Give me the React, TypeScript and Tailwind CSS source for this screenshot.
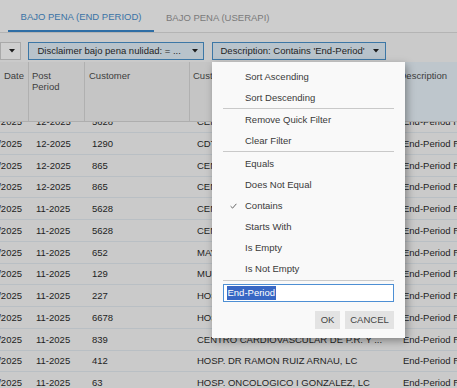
import React from "react";

type Row = { d: string; p: string; c: string; n: string; desc: string };

const rows: Row[] = [
  { d: "12/03/2025", p: "12-2025", c: "5628", n: "CENTRO DE DIAGNOSTICO Y TRATAMIENTO", desc: "End-Period Reversal" },
  { d: "12/03/2025", p: "12-2025", c: "1290", n: "CDT DE LOIZA INC", desc: "End-Period Reversal" },
  { d: "12/03/2025", p: "12-2025", c: "865", n: "CENTRO MEDICO DEL TURABO", desc: "End-Period Reversal" },
  { d: "12/03/2025", p: "12-2025", c: "865", n: "CENTRO MEDICO DEL TURABO", desc: "End-Period Reversal" },
  { d: "11/28/2025", p: "11-2025", c: "5628", n: "CENTRO DE DIAGNOSTICO Y TRATAMIENTO", desc: "End-Period Reversal" },
  { d: "11/28/2025", p: "11-2025", c: "5628", n: "CENTRO DE DIAGNOSTICO Y TRATAMIENTO", desc: "End-Period Reversal" },
  { d: "11/28/2025", p: "11-2025", c: "652", n: "MAYAGUEZ MEDICAL CENTER", desc: "End-Period Reversal" },
  { d: "11/28/2025", p: "11-2025", c: "129", n: "MUNICIPIO DE BAYAMON", desc: "End-Period Reversal" },
  { d: "11/28/2025", p: "11-2025", c: "227", n: "HOSPITAL GENERAL MENONITA", desc: "End-Period Reversal" },
  { d: "11/28/2025", p: "11-2025", c: "6678", n: "HOSPITAL SAN CARLOS BORROMEO", desc: "End-Period Reversal" },
  { d: "11/28/2025", p: "11-2025", c: "839", n: "CENTRO CARDIOVASCULAR DE P.R. Y DEL CARIBE", desc: "End-Period Reversal" },
  { d: "11/28/2025", p: "11-2025", c: "412", n: "HOSP. DR RAMON RUIZ ARNAU, LC", desc: "End-Period Reversal" },
  { d: "11/28/2025", p: "11-2025", c: "63", n: "HOSP. ONCOLOGICO I GONZALEZ, LC", desc: "End-Period Reversal" },
];

function Caret({ className = "" }: { className?: string }) {
  return (
    <svg width="6" height="4" viewBox="0 0 6 4" className={className}>
      <path d="M0 0 L6 0 L3 3.5 Z" fill="#1c1c1c" />
    </svg>
  );
}

const menuItems1 = ["Sort Ascending", "Sort Descending"];
const menuItems2 = ["Remove Quick Filter", "Clear Filter"];
const menuItems3 = ["Equals", "Does Not Equal", "Contains", "Starts With", "Is Empty", "Is Not Empty"];

function MenuItem({ label, checked }: { label: string; checked?: boolean }) {
  return (
    <div className="h-[21px] flex items-center relative pl-[33px] text-[#3a3a3a]">
      {checked && (
        <svg width="7" height="6" viewBox="0 0 7 6" className="absolute left-[18px] top-[8px]">
          <path d="M0.6 3.2 L2.6 5.1 L6.4 0.8" fill="none" stroke="#555" strokeWidth="0.9" />
        </svg>
      )}
      {label}
    </div>
  );
}

function Sep({ className = "" }: { className?: string }) {
  return <div className={"mx-[11px] h-px bg-[#c9c9c9] " + className} />;
}

export default function App() {
  return (
    <div className="w-[457px] h-[388px] overflow-hidden relative bg-[#cacaca] font-['Liberation_Sans',Arial,sans-serif] text-[9.5px] leading-[11px] text-[#1e1e1e] flex flex-col">
      {/* Tabs */}
      <div className="h-[33px] shrink-0 flex items-stretch border-b border-[#b4b4b4] bg-[#cdcdcd]">
        <div className="ml-[8px] w-[146px] flex items-center justify-center border-b-2 border-[#2f6ea5] text-[#3a73a6] pt-[3px]">
          BAJO PENA (END PERIOD)
        </div>
        <div className="ml-[12px] flex items-center text-[#7a7a7a] pt-[3px]">BAJO PENA (USERAPI)</div>
      </div>

      {/* Filter bar */}
      <div className="h-[29px] shrink-0 flex items-start pt-[8.7px]">
        <div className="w-[21px] h-[18.3px] border border-[#a9a9a9] bg-[#cfcfcf] flex items-center justify-end pr-[5px]">
          <Caret />
        </div>
        <div className="ml-[6.5px] w-[176px] h-[18.3px] border border-[#3c77a6] bg-[#b8c3cb] flex items-center justify-between pl-[9px] pr-[5px]">
          <span>Disclaimer bajo pena nulidad: = ...</span>
          <Caret />
        </div>
        <div className="ml-[8px] w-[174.5px] h-[18.3px] border border-[#3c77a6] bg-[#b8c3cb] flex items-center justify-between pl-[8px] pr-[6px]">
          <span>Description: Contains 'End-Period'</span>
          <Caret />
        </div>
      </div>

      {/* Header */}
      <div className="h-[60px] shrink-0 flex bg-[#c5c5c5] border-b border-[#aeaeae] text-[#3d3d3d]">
        <div className="w-[29px] shrink-0 border-r border-[#b0b0b0] flex justify-end pr-[4px] pt-[7.5px]">Date</div>
        <div className="w-[56px] shrink-0 border-r border-[#b0b0b0] pl-[3px] pt-[7.5px]">
          Post
          <br />
          Period
        </div>
        <div className="w-[105px] shrink-0 border-r border-[#b0b0b0] pl-[4px] pt-[7.5px]">Customer</div>
        <div className="w-[206px] shrink-0 border-r border-[#b0b0b0] pl-[3px] pt-[7.5px] whitespace-nowrap overflow-hidden">
          Customer Name
        </div>
        <div className="flex-1 bg-[#bec6cc] pl-[3.5px] pt-[7.5px] whitespace-nowrap">Description</div>
      </div>

      {/* Body */}
      <div className="flex-1 overflow-hidden">
        <div className="mt-[-10.75px]">
          {rows.map((r, i) => (
            <div key={i} className="h-[21.75px] flex items-center border-b border-[#b9bfc4] whitespace-nowrap">
              <div className="w-[29px] shrink-0 flex justify-end overflow-hidden pr-[7px]">
                <span className="shrink-0">{r.d}</span>
              </div>
              <div className="w-[56px] shrink-0 pl-[7px]">{r.p}</div>
              <div className="w-[105px] shrink-0 pl-[7px]">{r.c}</div>
              <div className="w-[206px] shrink-0 pl-[7px] pr-[8px] overflow-hidden text-ellipsis">{r.n.length > 33 ? r.n.slice(0, 31) + " ..." : r.n}</div>
              <div className="shrink-0 pl-[7px]">{r.desc}</div>
            </div>
          ))}
        </div>
      </div>

      {/* Dropdown menu */}
      <div className="absolute left-[212px] top-[62px] w-[193px] h-[276px] bg-[#f9f9f9] shadow-[2px_3px_8px_rgba(0,0,0,0.35)] pt-[3.5px]">
        {menuItems1.map((m) => (
          <MenuItem key={m} label={m} />
        ))}
        <Sep />
        {menuItems2.map((m) => (
          <MenuItem key={m} label={m} />
        ))}
        <Sep className="my-[0.5px]" />
        {menuItems3.map((m) => (
          <MenuItem key={m} label={m} checked={m === "Contains"} />
        ))}
        <Sep className="mt-[1px]" />
        <div className="mx-[11px] mt-[3px] h-[18.3px] border border-[#4d8fd4] bg-white flex items-center pl-[3px]">
          <span className="bg-[#3867c4] text-white px-[0.5px] leading-[14px]">End-Period</span>
        </div>
        <div className="flex justify-end gap-[5px] mr-[11px] mt-[9px]">
          <div className="w-[25px] h-[18px] bg-[#e3e3e3] text-[#444] flex items-center justify-center">OK</div>
          <div className="w-[49px] h-[18px] bg-[#e3e3e3] text-[#444] flex items-center justify-center">CANCEL</div>
        </div>
      </div>
    </div>
  );
}
